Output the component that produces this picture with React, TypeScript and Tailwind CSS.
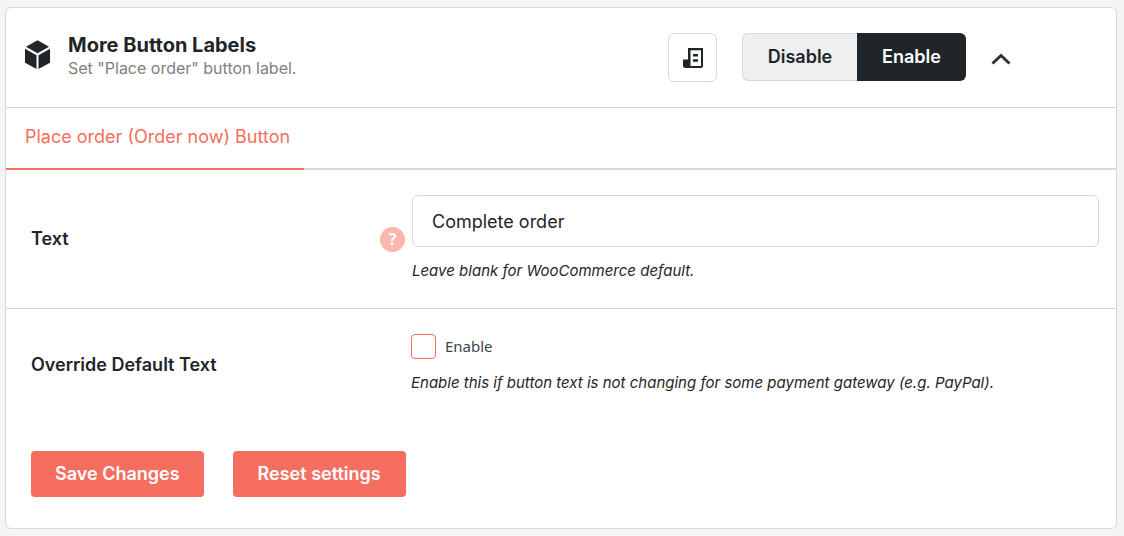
import React, { useState } from 'react';

const CubeIcon: React.FC = () => (
    <svg className="mb-1.5" width="25" height="30" viewBox="0 0 25 30" fill="#1f2529" aria-hidden="true">
        <path d="M12.5 0.3L24 6.7L12.5 13.2L1 6.7Z" />
        <path d="M0 8.8L11.5 15.2V29L0 22.8Z" />
        <path d="M25 8.8L13.5 15.2V29L25 22.8Z" />
    </svg>
);

const ReceiptIcon: React.FC = () => (
    <svg width="20" height="20" viewBox="0 0 20 20" aria-hidden="true">
        <path d="M0 11.5H5V0H20V18Q20 20 18 20H2.5Q0 20 0 17.5Z" fill="#1f2529" />
        <path d="M7.5 2.3H18V18H7.5Z" fill="#ffffff" />
        <path d="M10 6H15V8.5H10ZM10 11.3H15V13.8H10Z" fill="#1f2529" />
    </svg>
);

const ChevronUpIcon: React.FC = () => (
    <svg width="20" height="14" viewBox="0 0 20 14" fill="none" aria-hidden="true">
        <path d="M1.5 12.5L10 4.5L18.5 12.5" stroke="#2c3236" strokeWidth="3" />
    </svg>
);

export default function App() {
    const [enabled, setEnabled] = useState(true);
    const [text, setText] = useState('Complete order');
    const [override, setOverride] = useState(false);

    return (
        <div className="min-h-screen bg-[#f3f4f6] pt-[7px] pr-[7px] pb-[7px] pl-[5px] font-['Inter',sans-serif] text-[#1f2529]">
            <form
                className="rounded-md border border-[#d9d9d9] bg-white pb-[31px]"
                onSubmit={(e) => e.preventDefault()}
            >
                <header className="flex items-center border-b border-[#d9d9d9] pt-[25px] pr-[105px] pb-[25px] pl-[19px]">
                    <CubeIcon />
                    <div className="ml-[18px] flex-1 pb-[3px]">
                        <h2 className="text-xl leading-6 font-bold">More Button Labels</h2>
                        <p className="text-base leading-[22px] text-[#808080]">Set "Place order" button label.</p>
                    </div>
                    <button
                        type="button"
                        aria-label="Documentation"
                        className="flex size-[49px] items-center justify-center rounded-md border border-[#d9d9d9]"
                    >
                        <ReceiptIcon />
                    </button>
                    <div className="mb-px ml-[25px] flex h-12 text-lg font-semibold">
                        <button
                            type="button"
                            aria-pressed={!enabled}
                            onClick={() => setEnabled(false)}
                            className="w-[115px] rounded-l-md border border-r-0 border-[#d9d9d9] bg-[#efefef]"
                        >
                            Disable
                        </button>
                        <button
                            type="button"
                            aria-pressed={enabled}
                            onClick={() => setEnabled(true)}
                            className="w-[109px] rounded-r-md bg-[#1f2529] text-white"
                        >
                            Enable
                        </button>
                    </div>
                    <button type="button" aria-label="Collapse" className="ml-[25px]">
                        <ChevronUpIcon />
                    </button>
                </header>

                <nav className="flex border-b-2 border-[#d9d9d9]">
                    <a
                        href="#place-order"
                        className="-mb-[2px] border-b-2 border-[#f56e60] pt-[15px] pr-[14px] pb-[17px] pl-[19px] text-lg text-[#f56e60]"
                    >
                        Place order (Order now) Button
                    </a>
                </nav>

                <div className="flex items-center border-b border-[#d9d9d9] pt-[25px] pr-[17px] pb-[25px] pl-[25px]">
                    <label htmlFor="button-text" className="w-[349px] text-lg font-semibold">
                        Text
                    </label>
                    <button
                        type="button"
                        aria-label="Help"
                        className="mr-[7px] size-[25px] rounded-full bg-[#fab6af] font-['Noto_Sans',sans-serif] text-base leading-6 font-bold text-white"
                    >
                        ?
                    </button>
                    <div className="flex-1">
                        <input
                            id="button-text"
                            type="text"
                            value={text}
                            onChange={(e) => setText(e.target.value)}
                            className="block h-[52px] w-full rounded-md border border-[#d9d9d9] px-[19px] text-lg"
                        />
                        <p className="mt-3 text-[15px] leading-6 italic">Leave blank for WooCommerce default.</p>
                    </div>
                </div>

                <div className="flex items-center pt-[25px] pr-[17px] pb-[56px] pl-[25px]">
                    <span className="w-[380px] text-lg font-semibold">Override Default Text</span>
                    <div className="flex-1">
                        <label className="flex items-center gap-[9px] font-['Noto_Sans',sans-serif] text-[15px] text-[#3c434a]">
                            <input
                                type="checkbox"
                                checked={override}
                                onChange={(e) => setOverride(e.target.checked)}
                                className="size-[25px] appearance-none rounded border border-[#f56e60] checked:bg-[#f56e60]"
                            />
                            Enable
                        </label>
                        <p className="mt-3 text-[15px] leading-6 italic">
                            Enable this if button text is not changing for some payment gateway (e.g. PayPal).
                        </p>
                    </div>
                </div>

                <div className="flex gap-[29px] px-[25px] text-lg font-semibold text-white">
                    <button type="submit" className="h-[46px] rounded bg-[#f56e60] px-6">
                        Save Changes
                    </button>
                    <button type="reset" className="h-[46px] rounded bg-[#f56e60] px-[25px]">
                        Reset settings
                    </button>
                </div>
            </form>
        </div>
    );
}
